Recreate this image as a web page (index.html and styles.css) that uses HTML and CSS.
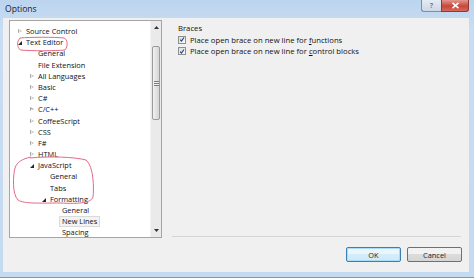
FILE: index.html
```html
<!DOCTYPE html>
<html>
<head>
<meta charset="utf-8">
<link rel="stylesheet" href="styles.css">
</head>
<body>
<div class="window">
  <div class="titlebar">
    <span class="title">Options</span>
    <div class="caption">
      <div class="cbtn help">?</div>
      <div class="cbtn close">
        <svg width="9" height="7" viewBox="0 0 9 7"><path d="M1.5 0.8 L7.5 6.2 M7.5 0.8 L1.5 6.2" stroke="#fff" stroke-width="1.6"/></svg>
      </div>
    </div>
  </div>
  <div class="client">
    <div class="main">
      <div class="tree">
        <ul class="items">
          <li class="row l0"><span class="arrow closed"></span>Source Control</li>
          <li class="row l0"><span class="arrow open"></span>Text Editor</li>
          <li class="row l1"><span class="arrow"></span>General</li>
          <li class="row l1"><span class="arrow"></span>File Extension</li>
          <li class="row l1"><span class="arrow closed"></span>All Languages</li>
          <li class="row l1"><span class="arrow closed"></span>Basic</li>
          <li class="row l1"><span class="arrow closed"></span>C#</li>
          <li class="row l1"><span class="arrow closed"></span>C/C++</li>
          <li class="row l1"><span class="arrow closed"></span>CoffeeScript</li>
          <li class="row l1"><span class="arrow closed"></span>CSS</li>
          <li class="row l1"><span class="arrow closed"></span>F#</li>
          <li class="row l1"><span class="arrow closed"></span>HTML</li>
          <li class="row l1"><span class="arrow open"></span>JavaScript</li>
          <li class="row l2"><span class="arrow"></span>General</li>
          <li class="row l2"><span class="arrow"></span>Tabs</li>
          <li class="row l2"><span class="arrow open"></span>Formatting</li>
          <li class="row l3"><span class="arrow"></span>General</li>
          <li class="row l3"><span class="arrow"></span><span class="sel">New Lines</span></li>
          <li class="row l3"><span class="arrow"></span>Spacing</li>
        </ul>
        <div class="scrollbar">
          <div class="sarrow"><svg width="5" height="3" viewBox="0 0 5 3"><path d="M0 3 L2.5 0 L5 3 Z" fill="#333"/></svg></div>
          <div class="track"><div class="thumb"><span class="grip"></span></div></div>
          <div class="sarrow"><svg width="5" height="3" viewBox="0 0 5 3"><path d="M0 0 L2.5 3 L5 0 Z" fill="#333"/></svg></div>
        </div>
      </div>
      <div class="panel">
        <div class="group-label">Braces</div>
        <div class="check"><span class="box"><svg width="7" height="7" viewBox="0 0 7 7"><path d="M1.4 3.6 L2.9 5.4 L5.8 1.2" fill="none" stroke="#1d3f86" stroke-width="1.3"/></svg></span><span class="lbl">Place open brace on new line for <u>f</u>unctions</span></div>
        <div class="check"><span class="box"><svg width="7" height="7" viewBox="0 0 7 7"><path d="M1.4 3.6 L2.9 5.4 L5.8 1.2" fill="none" stroke="#1d3f86" stroke-width="1.3"/></svg></span><span class="lbl">Place open brace on new line for <u>c</u>ontrol blocks</span></div>
      </div>
    </div>
    <div class="buttons">
      <div class="btn default">OK</div>
      <div class="btn">Cancel</div>
    </div>
  </div>
</div>
<svg class="annot" width="474" height="278" viewBox="0 0 474 278">
  <path d="M20 38 C30 37 55 37 64 38 C68 39 68 47 65 50 C55 51 30 51 21 50 C18 49 17 45 18 41 Z" fill="none" stroke="#e46a86" stroke-width="1"/>
  <path d="M30 158 C50 156 75 157 86 160 C94 166 94 190 93 197 C91 203 80 204 60 203 C40 203 24 204 18 200 C12 194 13 175 15 168 C17 162 22 159 31 157" fill="none" stroke="#e46a86" stroke-width="1"/>
</svg>
</body>
</html>
```

FILE: styles.css
```css
* { box-sizing: border-box; }
html, body { margin: 0; padding: 0; }
body {
  width: 474px;
  height: 278px;
  overflow: hidden;
  font-family: "Open Sans", "Noto Sans", sans-serif;
  font-size: 7.4px;
  color: #111;
  position: relative;
}
.window {
  width: 474px;
  height: 278px;
  background: linear-gradient(#bcd4ee, #c9def3 30px, #c4daf0);
  display: flex;
  flex-direction: column;
  border-bottom: 1px solid #7f98b5;
}
.titlebar {
  height: 18px;
  display: flex;
  align-items: flex-start;
  padding-left: 5px;
}
.title {
  font-size: 8.6px;
  line-height: 18px;
  color: #1b1b1b;
}
.caption {
  margin-left: auto;
  margin-right: 5px;
  display: flex;
}
.cbtn {
  height: 12px;
  display: flex;
  align-items: center;
  justify-content: center;
  border: 1px solid #7a8ea6;
  border-top: none;
}
.help {
  width: 20px;
  background: linear-gradient(#e4ebf3, #cdd8e5);
  border-radius: 0 0 0 3px;
  color: #6d7f94;
  font-size: 7px;
  font-weight: bold;
  border-right: none;
}
.close {
  width: 28px;
  background: linear-gradient(#e3978d, #c8473b 55%, #d46a5c);
  border-color: #8c3a33;
  border-radius: 0 0 3px 0;
}
.client {
  margin: 0 5px 0 3px;
  height: 254px;
  background: #f0f0f0;
  padding: 2px 7px 0 6px;
  display: flex;
  flex-direction: column;
}
.main {
  display: flex;
  height: 218px;
}
.tree {
  width: 153px;
  height: 218px;
  background: #fff;
  border: 1px solid #a5a5a5;
  display: flex;
  overflow: hidden;
}
.items {
  list-style: none;
  margin: 0;
  padding: 5px 0 0 0;
  flex: 1;
}
.row {
  height: 11.2px;
  line-height: 11.2px;
  display: flex;
  align-items: center;
  white-space: nowrap;
}
.l0 { padding-left: 7px; }
.l1 { padding-left: 19px; }
.l2 { padding-left: 31px; }
.l3 { padding-left: 43px; }
.arrow {
  width: 9px;
  height: 11px;
  position: relative;
  flex: none;
}
.arrow.closed::before {
  content: "";
  position: absolute;
  left: 1px;
  top: 3px;
  border-left: 4px solid #a6a6a6;
  border-top: 2.5px solid transparent;
  border-bottom: 2.5px solid transparent;
}
.arrow.closed::after {
  content: "";
  position: absolute;
  left: 2px;
  top: 4.2px;
  border-left: 2px solid #fff;
  border-top: 1.3px solid transparent;
  border-bottom: 1.3px solid transparent;
}
.arrow.open::before {
  content: "";
  position: absolute;
  left: 1px;
  top: 4px;
  border-right: 4px solid #262626;
  border-top: 4px solid transparent;
}
.sel {
  background: #f3f3f3;
  border: 1px solid #dadada;
  padding: 0 2px;
  margin-left: -3px;
  line-height: 9px;
}
.scrollbar {
  width: 11px;
  display: flex;
  flex-direction: column;
  background: #eaeaea;
  border-left: 1px solid #f3f3f3;
}
.sarrow {
  height: 13px;
  display: flex;
  align-items: center;
  justify-content: center;
}
.track {
  flex: 1;
  padding-top: 12px;
}
.thumb {
  height: 74px;
  margin: 0 1px;
  border: 1px solid #9b9b9b;
  border-radius: 2px;
  background: linear-gradient(90deg, #f3f3f3, #e2e2e2 50%, #d6d6d6);
  display: flex;
  align-items: center;
  justify-content: center;
}
.grip {
  width: 5px;
  height: 5px;
  background: repeating-linear-gradient(#7d7d7d 0 1px, #eee 1px 2px);
}
.panel {
  margin-left: 10px;
  width: 289px;
  height: 217px;
  border-bottom: 1px solid #d5d5d5;
  padding: 3px 0 0 6px;
  font-size: 7.7px;
}
.group-label {
  line-height: 11px;
}
.check {
  display: flex;
  align-items: center;
  height: 11.5px;
  white-space: nowrap;
}
.box {
  width: 8px;
  height: 8px;
  border: 1px solid #8e8f8f;
  background: linear-gradient(135deg, #dcdcdc, #fbfbfb);
  margin-right: 4px;
  display: flex;
  align-items: center;
  justify-content: center;
  flex: none;
}
.box svg { display: block; }
.buttons {
  display: flex;
  justify-content: flex-end;
  gap: 6px;
  margin-top: 9px;
}
.btn {
  width: 55px;
  height: 15px;
  border: 1px solid #707070;
  border-radius: 2px;
  background: linear-gradient(#f2f2f2 50%, #dcdcdc 50%, #d5d5d5);
  display: flex;
  align-items: center;
  justify-content: center;
  color: #1e1e1e;
}
.btn.default {
  border-color: #3c7fb1;
  background: linear-gradient(#ebf6fc 50%, #d4edfa 50%, #cde9f8);
  box-shadow: inset 0 0 0 1px #a9dcf6;
}
.annot {
  position: absolute;
  left: 0;
  top: 0;
  pointer-events: none;
}
```
